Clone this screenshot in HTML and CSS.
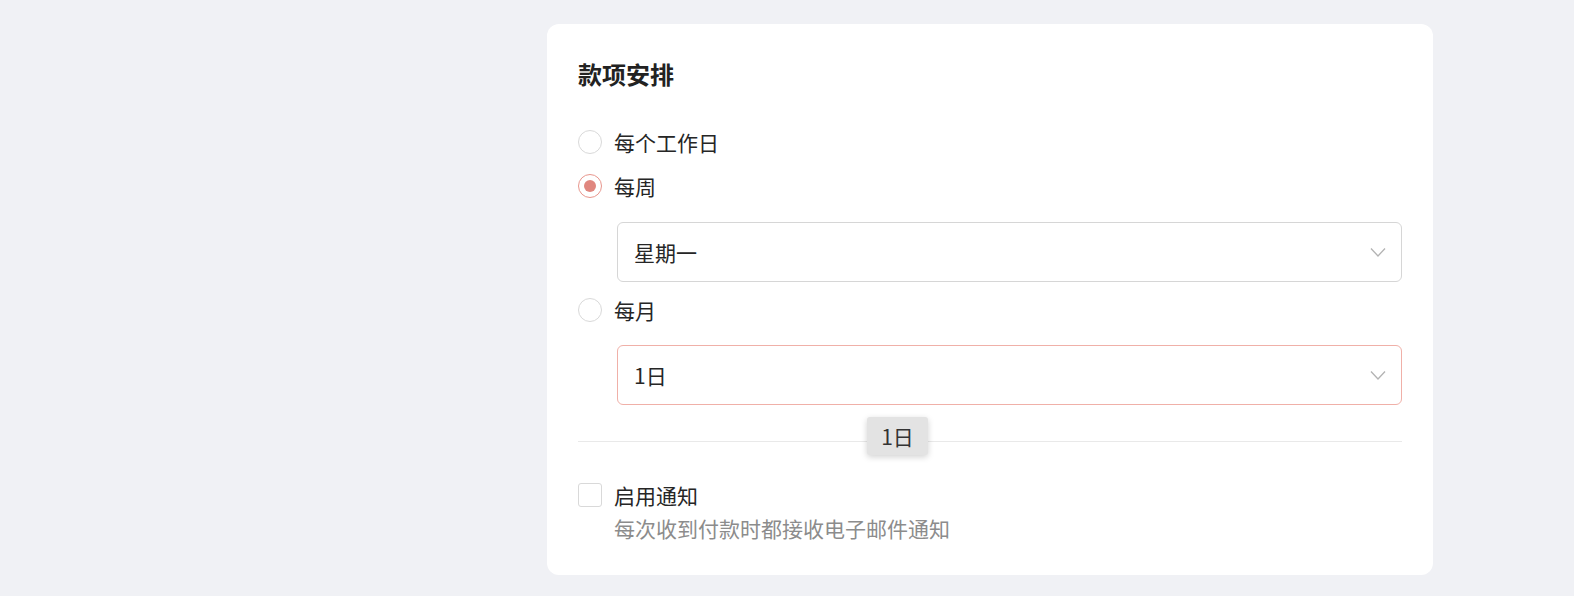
FILE: index.html
```html
<!DOCTYPE html>
<html lang="zh-CN">
<head>
    <meta charset="UTF-8">
    <meta name="viewport" content="width=device-width, initial-scale=1.0">
    <title>款项安排</title>
    <link rel="stylesheet" href="styles.css">
</head>
<body>

<main class="page">
    <section class="card">
        <h2 class="card-title">款项安排</h2>

        <div class="radio-group">
            <label class="radio-row">
                <span class="radio"></span>
                <span class="radio-label">每个工作日</span>
            </label>

            <label class="radio-row">
                <span class="radio checked"></span>
                <span class="radio-label">每周</span>
            </label>

            <div class="select select-week">
                <span class="select-value">星期一</span>
                <svg class="chevron" width="16" height="11" viewBox="0 0 16 11">
                    <path d="M1 1.5 L8 9 L15 1.5" fill="none" stroke="#b3b3b3" stroke-width="1.3"/>
                </svg>
            </div>

            <label class="radio-row">
                <span class="radio"></span>
                <span class="radio-label">每月</span>
            </label>

            <div class="select select-month active">
                <span class="select-value">1日</span>
                <svg class="chevron" width="16" height="11" viewBox="0 0 16 11">
                    <path d="M1 1.5 L8 9 L15 1.5" fill="none" stroke="#b3b3b3" stroke-width="1.3"/>
                </svg>
                <div class="tooltip">1日</div>
            </div>
        </div>

        <hr class="divider">

        <div class="notify">
            <label class="check-row">
                <span class="checkbox"></span>
                <span class="check-label">启用通知</span>
            </label>
            <p class="notify-desc">每次收到付款时都接收电子邮件通知</p>
        </div>
    </section>
</main>

</body>
</html>
```

FILE: styles.css
```css
body {
    font-family: "Noto Sans CJK SC", "Noto Sans", sans-serif;
    background-color: #f0f1f5;
    color: #262626;
    margin: 0;
    padding: 0;
}
.page {
    padding: 24px 0 0 547px;
}
.card {
    width: 824px;
    background-color: #fff;
    border-radius: 12px;
    padding: 34px 31px 32px 31px;
}
.card-title {
    margin: 0;
    font-size: 24px;
    line-height: 32px;
    font-weight: 700;
    color: #222;
}
.radio-group {
    margin-top: 30px;
    display: flex;
    flex-direction: column;
}
.radio-row {
    display: flex;
    align-items: center;
    gap: 12px;
    height: 44px;
    font-size: 21px;
}
.radio {
    width: 22px;
    height: 22px;
    border: 1px solid #d9d9d9;
    border-radius: 50%;
    display: flex;
    align-items: center;
    justify-content: center;
}
.radio.checked {
    border-color: #e8968d;
}
.radio.checked::after {
    content: "";
    width: 12px;
    height: 12px;
    border-radius: 50%;
    background-color: #e0877f;
}
.select {
    position: relative;
    margin-left: 39px;
    height: 58px;
    border: 1px solid #d6d6d6;
    border-radius: 6px;
    display: flex;
    align-items: center;
    justify-content: space-between;
    padding: 0 15px 0 16px;
    font-size: 21px;
}
.select-week {
    margin-top: 14px;
    margin-bottom: 6px;
}
.select-month {
    margin-top: 13px;
}
.select.active {
    border-color: #f0b0a8;
}
.tooltip {
    position: absolute;
    left: 249px;
    top: 71px;
    width: 61px;
    height: 38px;
    line-height: 38px;
    text-align: center;
    background-color: #e3e3e3;
    border-radius: 3px;
    box-shadow: 0 2px 6px rgba(0, 0, 0, 0.18);
    font-size: 21px;
    color: #333;
}
.divider {
    margin: 36px 0 0 0;
    border: none;
    border-top: 1px solid #e9e9e9;
}
.notify {
    margin-top: 38px;
}
.check-row {
    display: flex;
    align-items: center;
    gap: 12px;
    height: 30px;
    font-size: 21px;
}
.checkbox {
    width: 22px;
    height: 22px;
    border: 1px solid #d9d9d9;
    border-radius: 3px;
}
.notify-desc {
    margin: 3px 0 0 36px;
    font-size: 21px;
    line-height: 30px;
    color: #8c8c8c;
}
```
